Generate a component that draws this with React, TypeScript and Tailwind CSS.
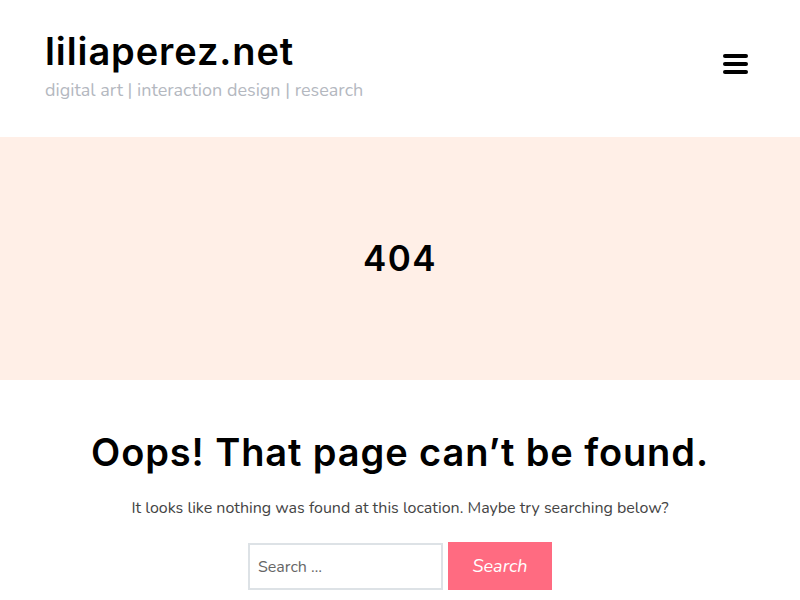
export default function App() {
  const heading = { fontFamily: "Inter, 'Open Sans', sans-serif" };
  const body = { fontFamily: "'Nunito', Lato, 'Open Sans', sans-serif" };

  return (
    <div className="w-[800px] h-[600px] overflow-hidden bg-white">
      {/* Header */}
      <header className="h-[137px] flex items-start justify-between pl-[45px] pr-[52px] pt-[28px]">
        <div>
          <h1
            className="text-[38px] leading-[46px] font-semibold text-black tracking-[0.9px]"
            style={heading}
          >
            liliaperez.net
          </h1>
          <p className="mt-[4px] text-[18px] leading-[24px] text-[#b4b8bf]" style={body}>
            digital art | interaction design | research
          </p>
        </div>
        <button className="mt-[26px] flex flex-col gap-[4px] w-[25px]" aria-label="menu">
          <span className="block h-[4px] w-[25px] rounded-[2px] bg-black" />
          <span className="block h-[4px] w-[25px] rounded-[2px] bg-black" />
          <span className="block h-[4px] w-[25px] rounded-[2px] bg-black" />
        </button>
      </header>

      {/* Title band */}
      <section className="h-[243px] bg-[#ffefe7] flex items-center justify-center">
        <h2 className="text-[35px] font-semibold text-black tracking-[1.5px]" style={heading}>
          404
        </h2>
      </section>

      {/* Content */}
      <main className="flex flex-col items-center pt-[46px]">
        <h3
          className="text-[38px] leading-[52px] font-semibold text-black tracking-[0.9px]"
          style={heading}
        >
          Oops! That page can’t be found.
        </h3>
        <p className="mt-[18px] text-[16px] leading-[24px] text-[#444]" style={body}>
          It looks like nothing was found at this location. Maybe try searching below?
        </p>
        <form className="mt-[22px] flex items-start gap-[5px]" onSubmit={(e) => e.preventDefault()}>
          <input
            type="search"
            placeholder="Search …"
            className="w-[195px] h-[47px] mt-[1px] border-2 border-[#dde2e6] px-[8px] text-[16px] text-[#555] placeholder:text-[#666] outline-none"
            style={body}
          />
          <button
            type="submit"
            className="w-[104px] h-[48px] bg-[#ff6b81] text-white text-[18px] italic"
            style={body}
          >
            Search
          </button>
        </form>
      </main>
    </div>
  );
}
